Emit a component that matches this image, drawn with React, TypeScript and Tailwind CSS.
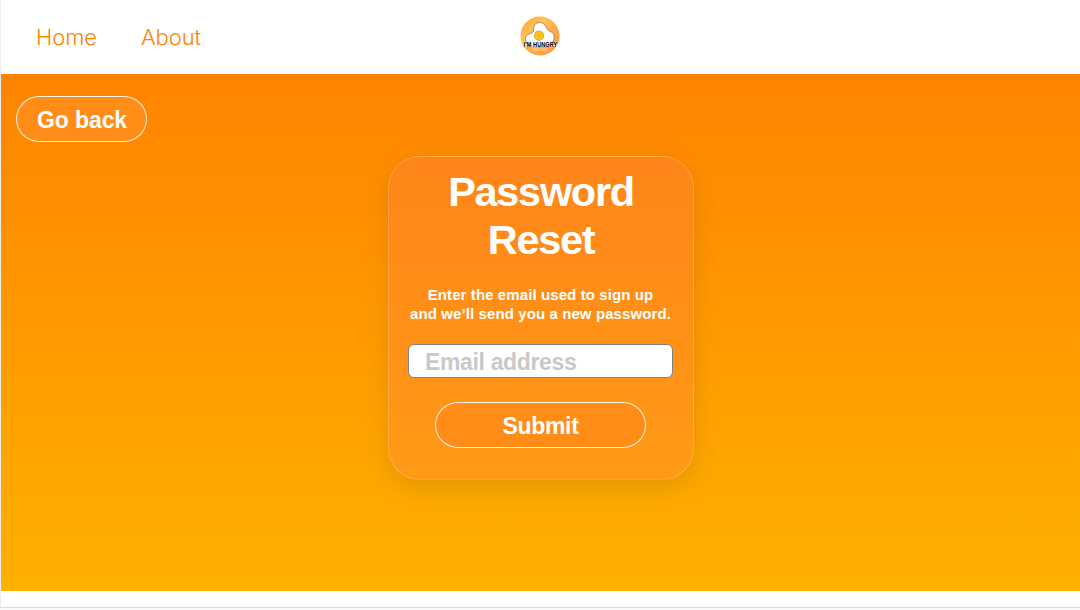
function Logo() {
  return (
    <svg width="40" height="40" viewBox="0 0 40 40" aria-label="I'm Hungry">
      <defs>
        <linearGradient id="disc" x1="0" y1="0" x2="1" y2="1">
          <stop offset="0" stopColor="#ff9f3c" />
          <stop offset="0.35" stopColor="#ffc457" />
          <stop offset="0.6" stopColor="#ffa94a" />
          <stop offset="1" stopColor="#ff9a45" />
        </linearGradient>
      </defs>
      <circle cx="20" cy="20" r="19.5" fill="url(#disc)" />
      <path
        d="M8 28C5 26 4.500 21 7.500 18.700C9.500 17.300 12.500 17.500 13.300 15.500C14 13.500 13 11 15 8.500C17 6 21.500 5.800 24 8C26.500 10.200 26 12.500 28.500 14.500C31 16.300 34 16.500 34.300 20C34.500 22.500 33 24 33 26C32.500 28 30 28.500 28 28.500C22 30.500 12 30.500 8 28Z"
        fill="#fff"
        stroke="#6b5a48"
        strokeWidth="0.6"
      />
      <circle cx="19" cy="19.700" r="4.800" fill="#fdc50f" stroke="#a3926a" strokeWidth="0.6" />
      <rect x="4" y="26" width="33" height="5" fill="#fff" fillOpacity="0.7" />
      <text x="20.500" y="31" textAnchor="middle" textLength="33.500" lengthAdjust="spacingAndGlyphs" fill="#000" className="font-['Liberation_Sans'] text-[6.300px] font-bold">
        I’M HUNGRY
      </text>
      <text x="20" y="35" textAnchor="middle" textLength="14" lengthAdjust="spacingAndGlyphs" fill="#ffe6c8" className="font-['Liberation_Sans'] text-[3px]">
        WHAT TO EAT
      </text>
    </svg>
  );
}

export default function App() {
  return (
    <div className="flex h-[610px] w-[1080px] flex-col overflow-hidden bg-[#fafafa] font-['Liberation_Sans',sans-serif]">
      <div className="flex h-[608px] flex-col border-b border-l border-b-[#dedede] border-l-[#ececec] bg-white">
        <header className="grid h-[74px] shrink-0 grid-cols-3 items-center">
          <nav className="flex gap-[44px] pl-[35px] font-['Inter',sans-serif] text-[22px] font-light leading-[30px] tracking-[-0.100px] text-[#ff8400]">
            <a>Home</a>
            <a>About</a>
          </nav>
          <div className="flex justify-center pb-[2px]">
            <Logo />
          </div>
        </header>
        <main className="h-[517px] shrink-0 bg-linear-to-b from-[#ff8400] to-[#ffb000] px-[15px] pt-[22px]">
          <button className="block h-[46px] w-[131px] rounded-full border border-white/90 bg-[#ff8d18] pl-[1px] pt-[2px] text-[23px] font-bold leading-none tracking-[-0.100px] text-white">
            Go back
          </button>
          <form className="mx-auto mt-[14px] flex h-[324px] w-[306px] flex-col items-center rounded-[32px] border border-white/20 bg-linear-to-b from-[#ff8518] to-[#ff9a17] shadow-[0_8px_24px_rgba(90,80,0,0.17)]">
            <h1 className="pl-[1px] pt-[11px] text-center text-[41.500px] font-bold leading-[48px] tracking-[-1.300px] text-white">
              Password
              <br />
              Reset
            </h1>
            <p className="mt-[22px] whitespace-nowrap text-center text-[15px] font-bold leading-[18.500px] tracking-[0.100px] text-white">
              Enter the email used to sign up
              <br />
              and we’ll send you a new password.
            </p>
            <input
              placeholder="Email address"
              className="mt-[21px] h-[34px] w-[265px] shrink-0 rounded-[6px] border border-[#808080] bg-white px-[16px] pt-[2px] text-[23px] font-bold tracking-[-0.350px] placeholder:text-[#c9c9c9]"
            />
            <button type="button" className="mt-[24px] h-[46px] w-[211px] shrink-0 rounded-full border border-white/90 bg-[#ff8d18] pt-[2px] text-[23px] font-bold leading-none tracking-[-0.300px] text-white">
              Submit
            </button>
          </form>
        </main>
      </div>
    </div>
  );
}
